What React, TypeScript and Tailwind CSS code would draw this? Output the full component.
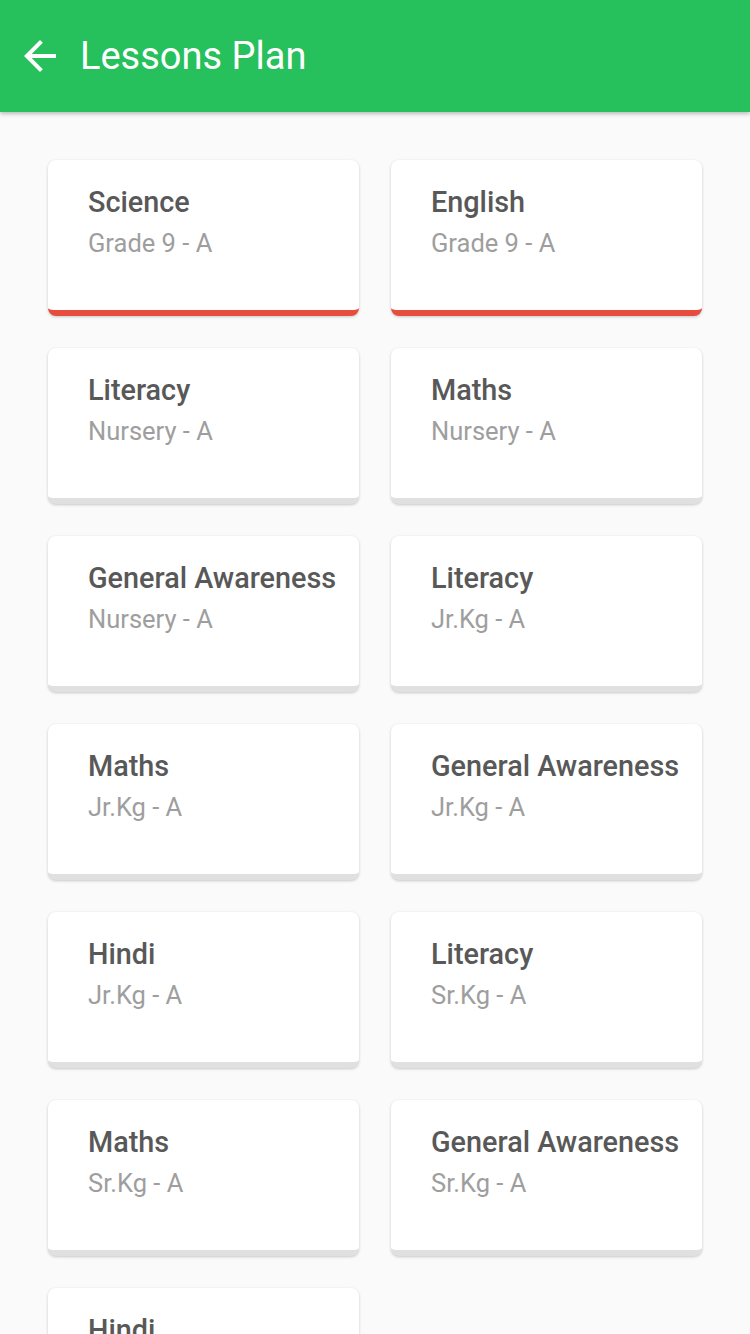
import React from 'react';

interface Lesson {
  subject: string;
  grade: string;
  highlight?: boolean;
}

const lessons: Lesson[] = [
  { subject: 'Science', grade: 'Grade 9 - A', highlight: true },
  { subject: 'English', grade: 'Grade 9 - A', highlight: true },
  { subject: 'Literacy', grade: 'Nursery - A' },
  { subject: 'Maths', grade: 'Nursery - A' },
  { subject: 'General Awareness', grade: 'Nursery - A' },
  { subject: 'Literacy', grade: 'Jr.Kg - A' },
  { subject: 'Maths', grade: 'Jr.Kg - A' },
  { subject: 'General Awareness', grade: 'Jr.Kg - A' },
  { subject: 'Hindi', grade: 'Jr.Kg - A' },
  { subject: 'Literacy', grade: 'Sr.Kg - A' },
  { subject: 'Maths', grade: 'Sr.Kg - A' },
  { subject: 'General Awareness', grade: 'Sr.Kg - A' },
  { subject: 'Hindi', grade: 'Sr.Kg - A' },
];

export default function App() {
  return (
    <div
      className="w-[750px] h-[1334px] overflow-hidden bg-[#fafafa]"
      style={{ fontFamily: 'Roboto, "Liberation Sans", sans-serif' }}
    >
      <header className="h-[112px] bg-[#26c05c] flex items-center pl-4 shadow-[0_2px_4px_rgba(0,0,0,0.25)] relative z-10">
        <svg viewBox="0 0 24 24" className="w-12 h-12" fill="#ffffff">
          <path d="M20 11H7.83l5.59-5.59L12 4l-8 8 8 8 1.41-1.41L7.83 13H20v-2z" />
        </svg>
        <h1 className="ml-4 text-white text-[38px] leading-none font-normal">Lessons Plan</h1>
      </header>

      <div className="grid grid-cols-2 gap-8 px-12 pt-12">
        {lessons.map((lesson, index) => (
          <div
            key={index}
            className={`h-[156px] bg-white rounded-lg border-b-[6px] pl-10 pt-[25px] shadow-[0_1px_3px_rgba(0,0,0,0.2)] ${
              lesson.highlight ? 'border-[#e74c3c]' : 'border-[#e0e0e0]'
            }`}
          >
            <div className="text-[28.8px] leading-[34px] font-medium text-[#585858] whitespace-nowrap">
              {lesson.subject}
            </div>
            <div className="mt-[9px] text-[25.5px] leading-[30px] text-[#9e9e9e]">{lesson.grade}</div>
          </div>
        ))}
      </div>
    </div>
  );
}
